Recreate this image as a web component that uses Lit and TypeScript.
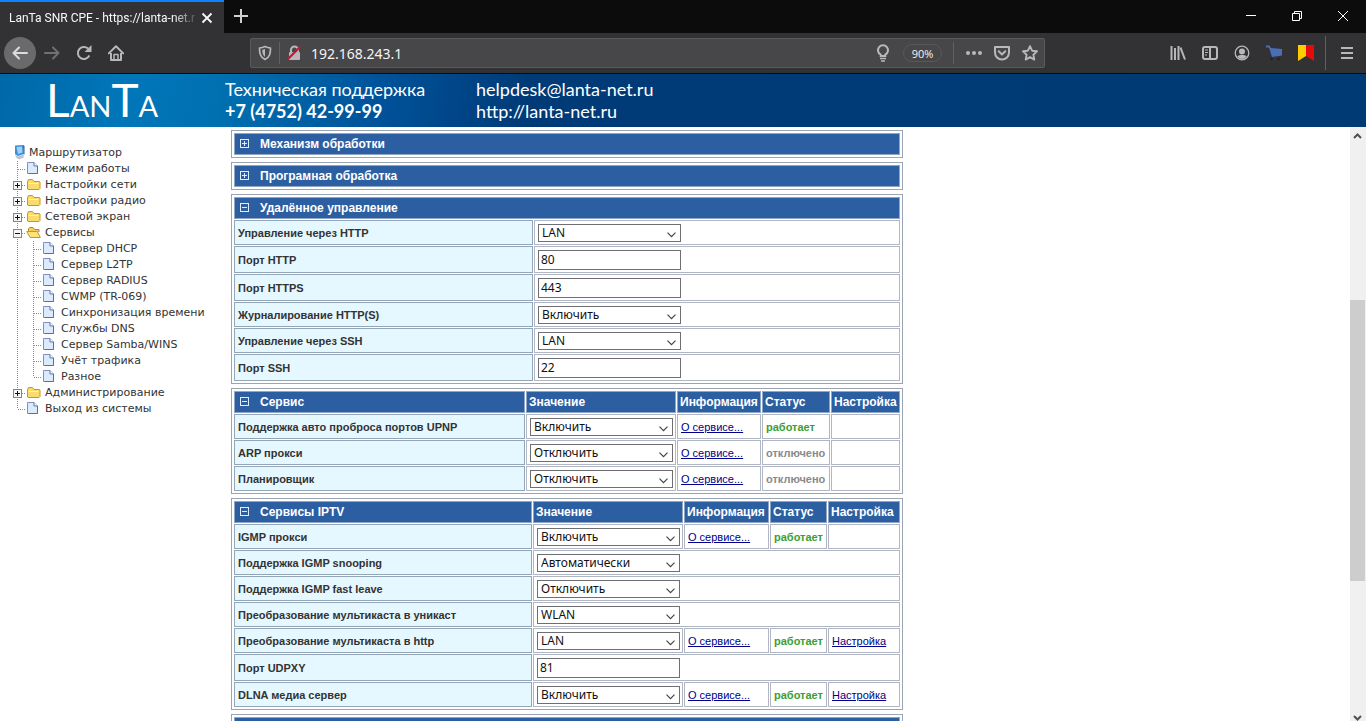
import { LitElement, html, svg, css, nothing } from "lit";
import { customElement, property } from "lit/decorators.js";
import { classMap } from "lit/directives/class-map.js";

/* ---------- browser chrome ---------- */

@customElement("browser-chrome")
class BrowserChrome extends LitElement {
  static styles = css`
    :host { display: block; font-family: "Open Sans", "Noto Sans", sans-serif; color: #f9f9fa; }
    * { box-sizing: border-box; }
    svg { display: block; }
    button { display: grid; place-items: center; padding: 0; border: 0; background: none; color: inherit; font: inherit; }
    .tabs { display: flex; height: 33px; background: #0c0c0d; }
    .tab { display: flex; align-items: center; width: 224px; padding: 0 9px; border-top: 2px solid #0a84ff; background: #323234; }
    .title { flex: 1; overflow: hidden; white-space: nowrap; font: 12px/16px Roboto, "Open Sans", sans-serif;
      -webkit-mask-image: linear-gradient(to right, #000 164px, transparent 190px); mask-image: linear-gradient(to right, #000 164px, transparent 190px); }
    .close { width: 16px; height: 16px; }
    .add { width: 34px; height: 32px; }
    .window { display: flex; margin-left: auto; }
    .window button { width: 46px; height: 32px; color: #fff; }
    .bar { display: grid; grid-template-columns: 250px minmax(300px, 1fr) 321px; align-items: center; height: 41px; background: #323234; border-bottom: 1px solid #0c0c0d; color: #b8b8ba; }
    .nav { display: flex; align-items: center; padding-left: 4px; }
    .nav button { width: 32px; height: 32px; }
    .nav .back { border-radius: 50%; background: #6a6a6c; color: #dcdcde; }
    .nav .off { color: #707072; }
    .url { display: flex; align-items: center; height: 30px; border: 1px solid #5b5b5d; border-radius: 2px; background: #474749; }
    .rule { width: 1px; height: 22px; background: #606062; }
    .address { flex: 1; min-width: 0; padding: 2px 0 0 3px; border: 0; outline: 0; background: none; color: #f4f4f5; font: 14px/20px "Noto Sans", sans-serif; }
    .zoom { width: 39px; height: 18px; margin: 0 11px 0 6px; border: 1px solid #58585a; border-radius: 9px; font-size: 11px; color: #f4f4f5; }
    .ib { width: 28px; height: 28px; }
    .actions { display: flex; padding-left: 6px; }
    .tools { display: flex; align-items: center; justify-content: flex-end; }
    .tools button { width: 32px; height: 32px; }
    .tools .rule { height: 34px; margin: 0 5px 0 3px; }
    .tools .menu { margin-right: 3px; }
  `;
  render() {
    return html`
      <div class="tabs">
        <div class="tab">
          <span class="title">LanTa SNR CPE - https://lanta-net.r</span>
          <button class="close" aria-label="Закрыть вкладку"><svg width="12" height="12" viewBox="0 0 12 12" stroke="currentColor" stroke-width="1.8"><path d="M1.5 1.5l9 9M10.500 1.500l-9 9" /></svg></button>
        </div>
        <button class="add" aria-label="Новая вкладка"><svg width="14" height="14" viewBox="0 0 14 14" stroke="#d0d0d2" stroke-width="2"><path d="M7 0v14M0 7h14" /></svg></button>
        <div class="window">
          <button aria-label="Свернуть"><svg width="10" height="10" stroke="currentColor"><path d="M0 4.500h10" /></svg></button>
          <button aria-label="Восстановить"><svg width="10" height="10" fill="none" stroke="currentColor"><path d="M.5 2.500h7v7h-7zM2.500 2.500v-2h7v7h-2" /></svg></button>
          <button aria-label="Закрыть"><svg width="10" height="10" stroke="currentColor"><path d="M0 0l10 10M10 0L0 10" /></svg></button>
        </div>
      </div>
      <div class="bar">
        <div class="nav">
          <button class="back" aria-label="Назад"><svg width="16" height="16" fill="none" stroke="currentColor" stroke-width="2" stroke-linecap="round" stroke-linejoin="round"><path d="M15 8H1.500M7 2.500L1.500 8 7 13.500" /></svg></button>
          <button class="off" aria-label="Вперёд"><svg width="16" height="16" fill="none" stroke="currentColor" stroke-width="2" stroke-linecap="round" stroke-linejoin="round"><path d="M1 8h13.500M9 2.500L14.500 8 9 13.500" /></svg></button>
          <button aria-label="Обновить"><svg width="16" height="16" fill="none" stroke="currentColor" stroke-width="2"><path d="M13.300 10.500A6 6 0 1 1 12 3.600" /><path d="M15.500 0v7h-7z" fill="currentColor" stroke="none" /></svg></button>
          <button aria-label="Домой"><svg width="16" height="16" fill="none" stroke="currentColor" stroke-width="2" stroke-linejoin="round"><path d="M.8 8.400L8 1.300l7.200 7.100" stroke-linecap="round" /><path d="M3 8v7h10V8" /><path d="M6 14V9.500h4V14" stroke-width="1.500" /></svg></button>
        </div>
        <div class="url">
          <button class="ib" aria-label="Защита"><svg width="14" height="16" fill="none" stroke="currentColor" stroke-width="1.700"><path d="M7 1.500C5 2.500 3 2.900 1.500 3 1.500 8 2 12 7 14.500 12 12 12.500 8 12.500 3 11 2.900 9 2.500 7 1.500z" stroke-linejoin="round" /><path d="M7 4v8C4.800 10.300 4.300 8 4.300 4.800 5.300 4.700 6.200 4.400 7 4z" fill="currentColor" stroke="none" /></svg></button>
          <span class="rule"></span>
          <button class="ib" aria-label="Небезопасное соединение"><svg width="16" height="16" fill="none"><rect x="3" y="7" width="11" height="8" rx="1" fill="#b8b8ba" /><path d="M5 8V5a3.500 3.500 0 0 1 7 0v3" stroke="#b8b8ba" stroke-width="2" /><path d="M1.500 14.500L14.500 1.500" stroke="#d0103a" stroke-width="2.200" /></svg></button>
          <input class="address" aria-label="Адрес" value="192.168.243.1" />
          <button class="ib" aria-label="Подсказка"><svg width="16" height="18" fill="none" stroke="currentColor" stroke-width="2"><path d="M5.700 12v-1.300a5 5 0 1 1 4.600 0V12z" /><path d="M5 14.500h6M6 17h4" stroke-width="1.600" /></svg></button>
          <button class="zoom">90%</button>
          <span class="rule"></span>
          <div class="actions">
            <button class="ib" aria-label="Действия"><svg width="18" height="4" fill="currentColor"><circle cx="3" cy="2" r="2" /><circle cx="9" cy="2" r="2" /><circle cx="15" cy="2" r="2" /></svg></button>
            <button class="ib" aria-label="Pocket"><svg width="16" height="16" fill="none" stroke="currentColor" stroke-width="2" stroke-linejoin="round"><path d="M1 2h14v5.500a7 7 0 0 1-14 0z" /><path d="M4.700 6.300L8 9.500l3.300-3.200" stroke-linecap="round" /></svg></button>
            <button class="ib" aria-label="Закладка"><svg width="16" height="16" fill="none" stroke="currentColor" stroke-width="1.900" stroke-linejoin="round"><path d="M8 1.200l2.100 4.500 4.900.6-3.600 3.400.9 4.900L8 12.200l-4.300 2.400.9-4.900L1 6.300l4.900-.6z" /></svg></button>
          </div>
        </div>
        <div class="tools">
          <button aria-label="Библиотека"><svg width="16" height="16" stroke="currentColor" stroke-width="2"><path d="M1.500 1v14M5 3v12M8.500 1v14" /><path d="M10.500 2.500l4.500 12" /></svg></button>
          <button aria-label="Боковая панель"><svg width="16" height="16" fill="none" stroke="currentColor" stroke-width="2"><rect x="1" y="2" width="14" height="12" rx="2" /><path d="M8 2v12" /><path d="M3 5h3M3 7.500h3M3 10h2" stroke-width="1" /></svg></button>
          <button aria-label="Аккаунт"><svg width="16" height="16" fill="none" stroke="currentColor"><circle cx="8" cy="8" r="6.800" stroke-width="1.300" /><circle cx="8" cy="6.500" r="3" fill="currentColor" stroke="none" /><path d="M3.300 11.300C5 9.500 11 9.500 12.700 11.300A5.500 5.500 0 0 1 3.300 11.300z" fill="currentColor" stroke="none" /></svg></button>
          <button aria-label="Покупки"><svg width="16" height="16"><path d="M0 .5h3.500L5 3l11 1v6.500L6 12 3 2.500H0z" fill="#4a6eb5" /><circle cx="5.500" cy="14" r="1.300" fill="#222" /><circle cx="12.500" cy="14" r="1.300" fill="#222" /></svg></button>
          <button aria-label="Метки"><svg width="16" height="16"><path d="M0 0h8v11l-8 5z" fill="#fc0" /><path d="M8 0h8v16l-8-5z" fill="#e60b0b" /></svg></button>
          <span class="rule"></span>
          <button class="menu" aria-label="Меню"><svg width="12" height="12" stroke="currentColor" stroke-width="2"><path d="M0 1h12M0 6h12M0 11h12" /></svg></button>
        </div>
      </div>
    `;
  }
}

/* ---------- provider banner ---------- */

@customElement("site-banner")
class SiteBanner extends LitElement {
  static styles = css`
    :host { display: flex; align-items: center; height: 53px; color: #fff; white-space: nowrap;
      background: linear-gradient(100deg, #0068a8 0, #0077b9 130px, #0070b0 220px, #00529a 380px, #003b78 520px, #003a74 100%); }
    .logo { box-sizing: border-box; width: 225px; padding: 5px 0 0 46px; font: 29px/48px Lato, "Open Sans", sans-serif; }
    .big { font-size: 46px; }
    .col { padding-bottom: 2px; font: 18px/22px Lato, "Open Sans", sans-serif; }
    .phone { width: 251px; }
    .strong { font-weight: 700; }
    .line { display: block; color: inherit; text-decoration: none; }
  `;
  render() {
    return html`
      <div class="logo"><span class="big">L</span>AN<span class="big">T</span>A</div>
      <div class="col phone"><span class="line">Техническая поддержка</span><span class="line strong">+7 (4752) 42-99-99</span></div>
      <div class="col"><a class="line" href="mailto:helpdesk@lanta-net.ru">helpdesk@lanta-net.ru</a><a class="line" href="http://lanta-net.ru">http://lanta-net.ru</a></div>
    `;
  }
}

/* ---------- navigation tree ---------- */

type Joint = "line" | "join" | "end" | "plus" | "minus";
type Icon = "pc" | "doc" | "folder" | "open";
type Node = [string, Icon, Joint[]];

const NODES: Node[] = [
  ["Маршрутизатор", "pc", []],
  ["Режим работы", "doc", ["join"]],
  ["Настройки сети", "folder", ["plus"]],
  ["Настройки радио", "folder", ["plus"]],
  ["Сетевой экран", "folder", ["plus"]],
  ["Сервисы", "open", ["minus"]],
  ["Сервер DHCP", "doc", ["line", "join"]],
  ["Сервер L2TP", "doc", ["line", "join"]],
  ["Сервер RADIUS", "doc", ["line", "join"]],
  ["CWMP (TR-069)", "doc", ["line", "join"]],
  ["Синхронизация времени", "doc", ["line", "join"]],
  ["Службы DNS", "doc", ["line", "join"]],
  ["Сервер Samba/WINS", "doc", ["line", "join"]],
  ["Учёт трафика", "doc", ["line", "join"]],
  ["Разное", "doc", ["line", "end"]],
  ["Администрирование", "folder", ["plus"]],
  ["Выход из системы", "doc", ["end"]],
];

const joint = (k: Joint) => html`<svg width="16" height="16" fill="none" stroke="#8c8c8c">
  <path d=${k === "end" ? "M7.500 0v8" : "M7.500 0v16"} stroke-dasharray="1 1" />
  ${k === "line" ? nothing : svg`<path d="M8 8.500h8" stroke-dasharray="1 1" />`}
  ${k === "plus" || k === "minus"
    ? svg`<rect x="3.500" y="4.500" width="8" height="8" fill="#f6f6f6" stroke="#858585" /><path d=${k === "plus" ? "M5 8.500h5M7.500 6v5" : "M5 8.500h5"} stroke="#111" />`
    : nothing}
</svg>`;

const ICONS = {
  pc: svg`<path d="M5 2.500l8-.5 1 9-6 2-3-2z" fill="#3f8fdc" /><path d="M6.500 4l5.500-.5.500 6-4.500 1.500z" fill="#9ad4ff" /><path d="M5 11.500l3 2 6-2-.5 3L9 16.500l-3-2z" fill="#b9c2cf" /><path d="M13 2l1.500 1v8.500l-.8-.5z" fill="#2156a8" />`,
  doc: svg`<path d="M1.500 3.500h6.500l3.500 3.500v7.500h-10z" fill="#dcebfb" stroke="#7d93bd" /><path d="M8 3.500V7h3.500" fill="#fff" stroke="#5973a5" /><path d="M11.500 7v7.500h-9" fill="none" stroke="#5671a6" />`,
  folder: svg`<path d="M1.500 6.500l1-2h4l1.500 2h5.500l.5.5v6.500l-1 1h-11l-.5-.5z" fill="#fbdc6b" stroke="#c0982d" /><path d="M2.500 8.500h10" stroke="#fff3b5" />`,
  open: svg`<path d="M2.500 9V5.500l1-1h3.500l1.500 2H13V9" fill="#f3cf58" stroke="#b48a24" /><path d="M.8 8.500h10.500l3 6H4z" fill="#fde27a" stroke="#c0982d" />`,
};

@customElement("nav-tree")
class NavTree extends LitElement {
  static styles = css`
    :host { display: block; padding: 18px 0 0 10px; font: 11px/16px "DejaVu Sans", Verdana, sans-serif; }
    .list { margin: 0; padding: 0; list-style: none; }
    .row { display: flex; height: 16px; white-space: nowrap; }
    svg { display: block; flex: none; overflow: visible; }
    .link { padding-left: 3px; color: #333; text-decoration: none; }
  `;
  render() {
    return html`<ul class="list">
      ${NODES.map(([text, icon, joints]) => html`<li class="row">${joints.map(joint)}<svg width="16" height="16" viewBox="0 2 16 16">${ICONS[icon]}</svg><a class="link" href="#">${text}</a></li>`)}
    </ul>`;
  }
}

/* ---------- settings tables ---------- */

interface Row { label: string; select?: string; input?: string; status?: "on" | "off"; setup?: boolean; }
interface Section { title: string; open: boolean; heads?: boolean; cols: number[]; rows: Row[]; }

const SECTIONS: Section[] = [
  { title: "Механизм обработки", open: false, cols: [], rows: [] },
  { title: "Програмная обработка", open: false, cols: [], rows: [] },
  {
    title: "Удалённое управление", open: true, cols: [299], rows: [
      { label: "Управление через HTTP", select: "LAN" },
      { label: "Порт HTTP", input: "80" },
      { label: "Порт HTTPS", input: "443" },
      { label: "Журналирование HTTP(S)", select: "Включить" },
      { label: "Управление через SSH", select: "LAN" },
      { label: "Порт SSH", input: "22" },
    ],
  },
  {
    title: "Сервис", open: true, heads: true, cols: [291, 150, 84, 68], rows: [
      { label: "Поддержка авто проброса портов UPNP", select: "Включить", status: "on" },
      { label: "ARP прокси", select: "Отключить", status: "off" },
      { label: "Планировщик", select: "Отключить", status: "off" },
    ],
  },
  {
    title: "Сервисы IPTV", open: true, heads: true, cols: [298, 150, 85, 57], rows: [
      { label: "IGMP прокси", select: "Включить", status: "on" },
      { label: "Поддержка IGMP snooping", select: "Автоматически" },
      { label: "Поддержка IGMP fast leave", select: "Отключить" },
      { label: "Преобразование мультикаста в уникаст", select: "WLAN" },
      { label: "Преобразование мультикаста в http", select: "LAN", status: "on", setup: true },
      { label: "Порт UDPXY", input: "81" },
      { label: "DLNA медиа сервер", select: "Включить", status: "on", setup: true },
    ],
  },
  { title: "", open: false, cols: [], rows: [] },
];

@customElement("settings-table")
class SettingsTable extends LitElement {
  @property({ attribute: false }) section!: Section;

  static styles = css`
    :host { display: block; font: 11px/14px "Liberation Sans", Arial, sans-serif; color: #333; }
    * { box-sizing: border-box; }
    .table { width: 100%; table-layout: fixed; border: 1px solid #9aa4b3; padding: 1px; border-collapse: separate; border-spacing: 1px; }
    .head, .name, .cell { padding: 0 3px; border: 1px solid #b0b6c4; text-align: left; white-space: nowrap; }
    .head { height: 22px; padding: 0 2px 1px; border-color: #8fa6c6; background: #2c5ea2; color: #fff; font-size: 12px; font-weight: 700; }
    .toggle { display: flex; align-items: center; gap: 11px; padding: 0 0 0 3px; border: 0; background: none; color: inherit; font: inherit; }
    .name { border-color: #93a6b8; background: #e5f7ff; font-weight: 700; }
    .row .name, .row .cell { height: 25px; }
    .tall .name, .tall .cell { height: 27px; }
    .field { display: block; width: 143px; border: 1px solid #6f6f73; border-radius: 0; margin: 0; background-color: #fff; color: #111; font: 12px/16px "Noto Sans", Tahoma, sans-serif; outline: 0; }
    .select { height: 18px; padding: 0 18px 0 3px; appearance: none; background-image: url("data:image/svg+xml,%3Csvg xmlns='http://www.w3.org/2000/svg' width='9' height='6' fill='none' stroke='%23444' stroke-width='1.200'%3E%3Cpath d='M.5 .7l4 4 4-4'/%3E%3C/svg%3E"); background-repeat: no-repeat; background-position: right 4px top 7px; }
    .input { height: 20px; padding: 0 2px; }
    .link { color: #00008c; }
    .status { font-weight: 700; }
    .on { color: #3a9e33; }
    .off { color: #8a8a8a; }
  `;

  render() {
    const s = this.section;
    const wide = s.heads ? 4 : 1;
    return html`<table class="table">
      ${s.cols.length ? html`<colgroup>${s.cols.map((w) => html`<col style="width:${w}px" />`)}<col /></colgroup>` : nothing}
      <thead><tr>
        <th class="head" colspan=${s.heads || !s.cols.length ? 1 : 2}>
          <button class="toggle" aria-expanded=${s.open ? "true" : "false"}>
            <svg width="9" height="9" fill="none" stroke="#e4ecf8"><rect x=".5" y=".5" width="8" height="8" /><path d=${s.open ? "M2 4.500h5" : "M2 4.500h5M4.500 2v5"} /></svg>
            <span>${s.title}</span>
          </button>
        </th>
        ${s.heads ? ["Значение", "Информация", "Статус", "Настройка"].map((h) => html`<th class="head">${h}</th>`) : nothing}
      </tr></thead>
      <tbody>${s.rows.map((r, i) => html`<tr class=${classMap({ row: true, tall: !!r.input })}>
        <td class="name"><label for="f${i}">${r.label}</label></td>
        <td class="cell" colspan=${r.status ? 1 : wide}>
          ${r.input
            ? html`<input class="field input" id="f${i}" .value=${r.input} />`
            : html`<select class="field select" id="f${i}"><option>${r.select}</option></select>`}
        </td>
        ${r.status ? html`
          <td class="cell"><a class="link" href="#">О сервисе...</a></td>
          <td class="cell status ${r.status}">${r.status === "on" ? "работает" : "отключено"}</td>
          <td class="cell">${r.setup ? html`<a class="link" href="#">Настройка</a>` : nothing}</td>` : nothing}
      </tr>`)}</tbody>
    </table>`;
  }
}

/* ---------- page ---------- */

@customElement("app-root")
class AppRoot extends LitElement {
  static styles = css`
    :host { display: flex; flex-direction: column; height: 100vh; overflow: hidden; background: #fff; }
    .page { display: grid; grid-template-columns: 231px minmax(0, 1fr) 16px; flex: 1; min-height: 0; overflow: hidden; }
    .main { display: flex; flex-direction: column; gap: 4px; max-width: 672px; min-height: 0; padding-top: 3px; }
    .scroll { display: flex; flex-direction: column; background: #f0f0f0; height: 100%; }
    .arrow { display: grid; place-items: center; height: 17px; flex: none; margin-right: 1px; }
    .down { height: 7px; }
    .before { flex: 156; }
    .thumb { flex: 281; background: #cdcdcd; margin-right: 1px; }
    .after { flex: 133; }
  `;
  render() {
    return html`
      <browser-chrome></browser-chrome>
      <site-banner></site-banner>
      <div class="page">
        <nav-tree></nav-tree>
        <main class="main">${SECTIONS.map((s) => html`<settings-table .section=${s}></settings-table>`)}</main>
        <div class="scroll">
          <span class="arrow"><svg width="9" height="6" fill="none" stroke="#505050" stroke-width="2"><path d="M1 5l3.500-3.500L8 5" /></svg></span>
          <span class="before"></span><span class="thumb"></span><span class="after"></span>
          <span class="arrow down"><svg width="9" height="6" fill="none" stroke="#505050" stroke-width="2"><path d="M1 1l3.500 3.500L8 1" /></svg></span>
        </div>
      </div>
    `;
  }
}
